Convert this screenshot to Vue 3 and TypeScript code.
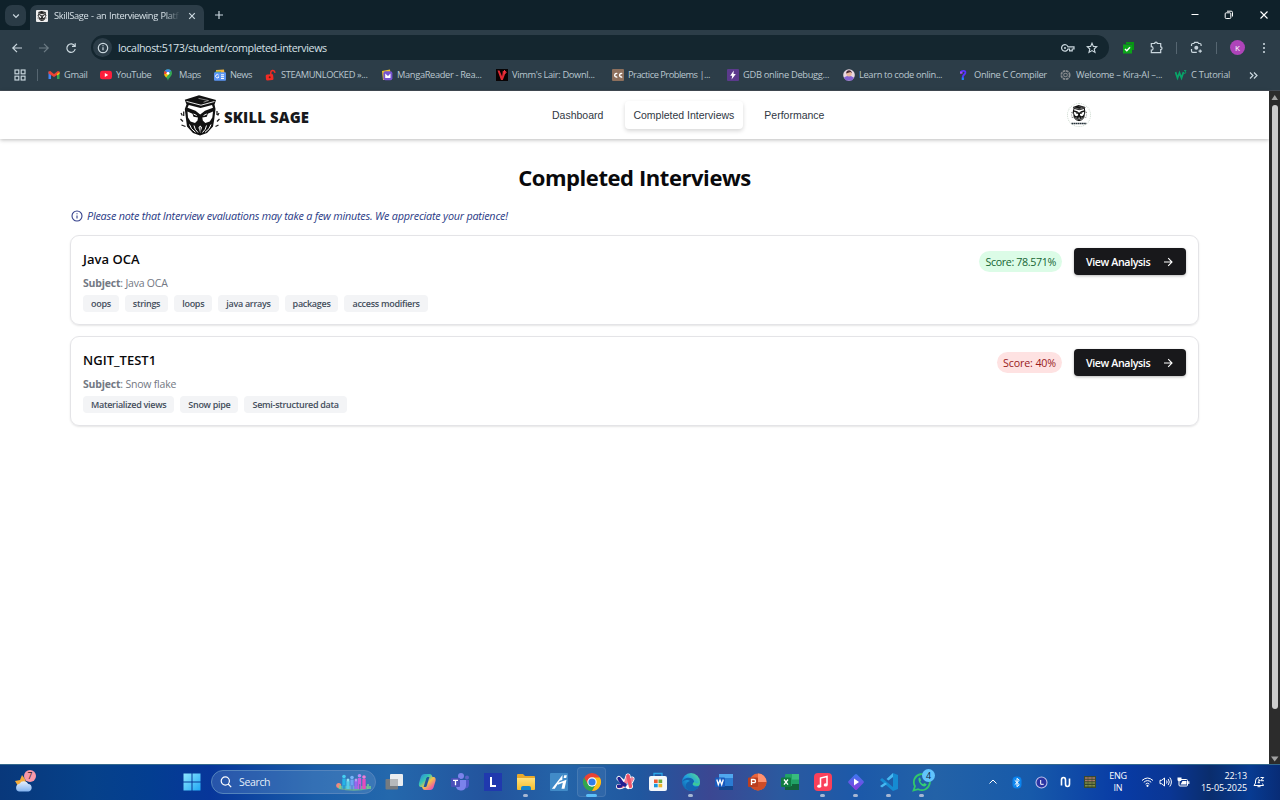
<script setup lang="ts">
interface Bookmark { name: string; icon: string; width: number; gap: number; spacing: number }
interface Interview { title: string; subject: string; topics: string[]; score: string; passed: boolean }

const bookmarks: Bookmark[] = [
  { name: 'Gmail', icon: 'gmail', width: 52, gap: 16, spacing: -0.35 },
  { name: 'YouTube', icon: 'youtube', width: 63, gap: 16, spacing: -0.4 },
  { name: 'Maps', icon: 'maps', width: 51, gap: 16, spacing: -0.45 },
  { name: 'News', icon: 'news', width: 51, gap: 16, spacing: -0.5 },
  { name: 'STEAMUNLOCKED »...', icon: 'lock', width: 116, gap: 16, spacing: -0.38 },
  { name: 'MangaReader - Rea...', icon: 'manga', width: 115, gap: 16, spacing: -0.35 },
  { name: "Vimm's Lair: Downl...", icon: 'vimm', width: 116, gap: 16, spacing: -0.35 },
  { name: 'Practice Problems |...', icon: 'cc', width: 115, gap: 16, spacing: -0.5 },
  { name: 'GDB online Debugg...', icon: 'gdb', width: 116, gap: 16, spacing: -0.3 },
  { name: 'Learn to code onlin...', icon: 'learn', width: 115, gap: 16, spacing: -0.35 },
  { name: 'Online C Compiler', icon: 'compiler', width: 102, gap: 16, spacing: -0.35 },
  { name: 'Welcome – Kira-AI –...', icon: 'kira', width: 115, gap: 16, spacing: -0.28 },
  { name: 'C Tutorial', icon: 'w3', width: 72, gap: 16, spacing: -0.25 }
]

const interviews: Interview[] = [
  { title: 'Java OCA', subject: 'Java OCA', topics: ['oops', 'strings', 'loops', 'java arrays', 'packages', 'access modifiers'], score: '78.571%', passed: true },
  { title: 'NGIT_TEST1', subject: 'Snow flake', topics: ['Materialized views', 'Snow pipe', 'Semi-structured data'], score: '40%', passed: false }
]

const apps = ['desktop', 'copilot', 'teams', 'l', 'files', 'ai', 'chrome', 'arc', 'store', 'edge', 'word', 'ppt', 'excel', 'music', 'clip', 'code', 'whatsapp']
const running = ['files', 'edge', 'music', 'clip', 'code', 'whatsapp']
</script>

<template>
  <div class="screen">
    <svg class="defs" width="0" height="0">
      <defs>
        <linearGradient id="win" x1="0" y1="0" x2="1" y2="1"><stop offset="0" stop-color="#8ee6ff" /><stop offset="1" stop-color="#1fa8f5" /></linearGradient>
        <linearGradient id="cop" x1="0" y1="0" x2="1" y2="1"><stop offset="0" stop-color="#2a7de8" /><stop offset=".35" stop-color="#35c7b2" /><stop offset=".55" stop-color="#f3c34a" /><stop offset=".8" stop-color="#f0639a" /><stop offset="1" stop-color="#b35cf0" /></linearGradient>
        <linearGradient id="edgeg" x1="0" y1="1" x2="1" y2="0"><stop offset="0" stop-color="#0c59a4" /><stop offset=".5" stop-color="#1f9de0" /><stop offset="1" stop-color="#5be38a" /></linearGradient>
        <linearGradient id="folder" x1="0" y1="0" x2="0" y2="1"><stop offset="0" stop-color="#ffe07a" /><stop offset="1" stop-color="#f7bd2d" /></linearGradient>
        <linearGradient id="cloud" x1="0" y1="0" x2="0" y2="1"><stop offset="0" stop-color="#e6effc" /><stop offset="1" stop-color="#83b4f1" /></linearGradient>
        <linearGradient id="clipg" x1="0" y1="0" x2="1" y2="1"><stop offset="0" stop-color="#397bf0" /><stop offset="1" stop-color="#8b39dd" /></linearGradient>
        <symbol id="owl" viewBox="0 0 40 41">
          <path d="M4.800 4.800 19 .2 36 5 34.500 9.500 35.500 14 34.300 24 33 31.500 27 38 20 40.500 13 38 7 31.500 6 24 4.800 14 6.500 9.500Z" fill="#111" />
          <path d="M6.500 6.400 21 10.200 34.500 6.500" fill="none" stroke="#fff" stroke-width=".9" />
          <path d="M18.500 3.400 28.500 5.500 23.500 7.200" fill="none" stroke="#bbb" stroke-width=".7" />
          <path d="M8.800 10 20.500 13 32 10 33 12.800 25 15.800 20.200 19.500 15.500 15.800 7.500 12.800Z" fill="#fff" />
          <path d="M7.500 16.500 12.500 18.800 13.500 21.800 18 22.500 17.500 25.500 15 28 10.500 26.500 8 22.500Z" fill="#fff" />
          <path d="M33 16.500 27.800 18.800 26.800 21.800 22.300 22.500 22.800 25.500 25.300 28 29.800 26.500 32.300 22.500Z" fill="#fff" />
          <path d="M13.500 19 16.700 20.500M26.800 19 23.600 20.500" stroke="#fff" stroke-width="1" />
          <path d="M9.500 29.500Q10.500 34 15.500 37.300M31 29.500Q30 34 25 37.300M14 30.500Q14.500 34.500 18 37.500M26.500 30.500Q26 34.500 22.500 37.500" fill="none" stroke="#fff" stroke-width="1" />
          <path d="M18.500 32.500 20.200 30.500 22 32.500 20.200 38Z" fill="#fff" />
          <path d="M20.200 32v5" stroke="#111" stroke-width=".8" />
          <path d="M1 18 2.300 20.500M.5 24 3 26.500M1.500 30 5.500 31.500M3.700 16.500V21M39 18 37.700 20.500M39.500 24 37 26.500M38.500 30 35.500 31.500M37 16V20" fill="none" stroke="#222" stroke-width="1.300" />
        </symbol>
      </defs>
    </svg>

    <header class="browser">
      <div class="tabstrip">
        <div class="tabsearch"><svg width="10" height="10" viewBox="0 0 10 10"><path d="M2.200 3.500 5 6.300 7.800 3.500" class="ln" /></svg></div>
        <div class="tab">
          <svg class="favicon" width="12" height="12" viewBox="0 0 12 12"><rect width="12" height="12" rx="1" fill="#eee" /><use href="#owl" x="1" y=".5" width="10" height="11" /></svg>
          <span class="tabtitle">SkillSage - an Interviewing Platf</span>
          <svg class="tabclose" width="8" height="8" viewBox="0 0 8 8"><path d="m1.200 1.200 5.600 5.600M6.800 1.200 1.200 6.800" class="ln" /></svg>
        </div>
        <svg class="plus" width="10" height="10" viewBox="0 0 10 10"><path d="M5 1v8M1 5h8" class="ln" /></svg>
        <div class="wincontrols">
          <svg width="8" height="10" viewBox="0 0 8 10"><path d="M.5 4.500h7" stroke="#fff" /></svg>
          <svg width="10" height="10" viewBox="0 0 10 10" fill="none" stroke="#fff"><rect x="1.200" y="2.800" width="5.600" height="5.700" rx="1" /><path d="M3 1.200h4.200a1.300 1.300 0 0 1 1.300 1.300v4" /></svg>
          <svg width="10" height="10" viewBox="0 0 10 10"><path d="m1.500 1.500 7 7M8.500 1.500l-7 7" stroke="#fff" stroke-width="1.100" /></svg>
        </div>
      </div>

      <div class="toolbar">
        <div class="navicons">
          <svg width="12" height="12" viewBox="0 0 12 12"><path d="M11 6H2M6 1.800 1.800 6 6 10.200" class="ln" /></svg>
          <svg class="dim" width="12" height="12" viewBox="0 0 12 12"><path d="M1 6h9M6 1.800 10.200 6 6 10.200" class="ln" /></svg>
          <svg width="12" height="12" viewBox="0 0 12 12"><path d="M9.700 4A4.200 4.200 0 1 0 10.200 7M10.200 1.200v3.200H7" class="ln" /></svg>
        </div>
        <div class="omnibox">
          <div class="siteinfo"><svg width="12" height="12" viewBox="0 0 12 12"><circle cx="6" cy="6" r="4.700" class="ln" /><path d="M6 5.300v3M6 3.200v1" class="ln" /></svg></div>
          <span class="url">localhost:5173/student/completed-interviews</span>
          <div class="omniactions">
            <svg width="14" height="10" viewBox="0 0 14 10"><path d="M7 3.800A3.300 3.300 0 1 0 7 6h1.600v1.800h2.600V6H13V3.800Z" class="ln" /><circle cx="4" cy="4.900" r="1" fill="#cbd8df" /></svg>
            <svg width="12" height="12" viewBox="0 0 12 12"><path d="m6 1.200 1.400 3.200 3.400.3-2.600 2.300.8 3.400-3-1.800-3 1.800.8-3.400L1.200 4.700l3.400-.3Z" class="ln thin" /></svg>
          </div>
        </div>
        <div class="extensions">
          <svg class="ext-green" width="13" height="13" viewBox="0 0 13 13"><path d="M4 1h8v8h-2V3H4Z" fill="#079613" /><rect x="1" y="3.500" width="9" height="9" fill="#0ca51a" /><path d="m3 8 1.800 1.800L8 6.200" fill="none" stroke="#fff" stroke-width="1.400" /></svg>
          <svg class="ext-puzzle" width="13" height="13" viewBox="0 0 13 13"><path d="M1.300 2.500h3.400a1.300 1.300 0 0 1 2.600 0h3.400v3.400a1.300 1.300 0 0 1 0 2.600v3.200H1.300V9.200a1.800 1.800 0 0 0 0-3.600Z" class="ln" /></svg>
          <i class="sep sep-a"></i>
          <svg class="ext-lens" width="13" height="13" viewBox="0 0 13 13"><path d="M1.500 5V3.800c0-.8.500-1.300 1.300-1.300h1.100l.7-1.200h3.200l.7 1.200h1.300c.8 0 1.300.5 1.300 1.300V5M1.500 8v2c0 .8.500 1.300 1.300 1.300h4" class="ln" /><circle cx="6.300" cy="6.800" r="2" fill="#c5d1d9" /><path d="M10.200 8.400v3.400M8.500 10.100h3.400" class="ln" /></svg>
          <i class="sep sep-b"></i>
          <span class="avatar">K</span>
          <svg class="more" width="4" height="12" viewBox="0 0 4 12" fill="#d3dfe6"><circle cx="2" cy="2" r="1" /><circle cx="2" cy="6" r="1" /><circle cx="2" cy="10" r="1" /></svg>
        </div>
      </div>

      <div class="bookmarks">
        <svg class="grid" width="12" height="12" viewBox="0 0 12 12" fill="none" stroke="#c5d2da" stroke-width="1.200"><rect x="1" y="1" width="3.800" height="3.800" /><rect x="7.200" y="1" width="3.800" height="3.800" /><rect x="1" y="7.200" width="3.800" height="3.800" /><rect x="7.200" y="7.200" width="3.800" height="3.800" /></svg>
        <i class="sep sep-bm"></i>
        <div v-for="b in bookmarks" :key="b.name" class="bookmark" :style="{ width: b.width + 'px', letterSpacing: b.spacing + 'px' }">
          <span class="bmicon" :style="{ width: b.gap + 'px' }">
            <svg width="12" height="12" viewBox="0 0 12 12">
              <g v-if="b.icon === 'gmail'"><path d="M.5 2.500V10H3V5Z" fill="#4285f4" /><path d="M11.500 2.500V10H9V5Z" fill="#34a853" /><path d="M.5 2.500 2.200 2 6 5l3.800-3 1.700.5v2L6 8 .5 4.500Z" fill="#ea4335" /><path d="m9 5 2.500-2v2L9 6.500Z" fill="#fbbc04" /></g>
              <g v-else-if="b.icon === 'youtube'"><rect y="1.800" width="12" height="8.500" rx="2.400" fill="#ff1e3c" /><path d="m4.800 4 3.400 2-3.400 2Z" fill="#fff" /></g>
              <g v-else-if="b.icon === 'maps'"><path d="M5 .3A4 4 0 0 0 .9 4.300C.9 7.500 4.300 8.300 5 11.800 5.700 8.300 9 7.500 9 4.300A4 4 0 0 0 5 .3Z" fill="#34a853" /><path d="M5 .3A4 4 0 0 0 1.800 1.800L5 4.400 8.200 1.800A4 4 0 0 0 5 .3Z" fill="#4285f4" /><path d="M1.800 1.800a4 4 0 0 0-.7 3.800L5 4.400Z" fill="#ea4335" /><path d="M1.100 5.600c.4 1.300 1.300 2 2 2.800L6 5 5 4Z" fill="#fbbc04" /><circle cx="5" cy="4.300" r="1.400" fill="#fff" /></g>
              <g v-else-if="b.icon === 'news'"><path d="m2 1 8-.5.5 4H2Z" fill="#f3b53d" /><path d="M1 2.600h6V5H1Z" fill="#34a853" /><rect y="3.300" width="12" height="8.500" rx="1" fill="#5b95f5" /><path d="M4.700 6.200a1.700 1.700 0 1 0 .2 1.700H3.800M7 5.800h3M7 7.700h3M7 9.500h3" stroke="#fff" fill="none" /></g>
              <g v-else-if="b.icon === 'lock'"><path d="M5.800 6V3.500a2 2 0 0 1 3.900-.6l.3 1" fill="none" stroke="#f22b25" stroke-width="1.500" /><rect x=".8" y="5.300" width="7.500" height="6" rx="1.500" fill="#f22b25" transform="rotate(-6 5 8)" /><circle cx="4.700" cy="8.300" r="1" fill="#621" /></g>
              <g v-else-if="b.icon === 'manga'"><path d="m1 2 8-1.500L10 10 2 11Z" fill="#f0c52f" /><rect x="2.400" y="2.200" width="9" height="9" rx="2" fill="#7753cf" /><path d="M4.200 9V4.600L7 7l2.500-2.400V9Z" fill="#fff" /></g>
              <g v-else-if="b.icon === 'vimm'"><rect width="12" height="12" fill="#080304" /><path d="M1.500 1.500h2l2.600 6L6.800 2h3.500L6.800 11H5Z" fill="#e02732" /><path d="M8.500 1v4l2-2" stroke="#ed3440" fill="none" /></g>
              <g v-else-if="b.icon === 'cc'"><rect width="12" height="12" rx="1" fill="#8e705d" /><path d="M5.300 4.600a1.800 1.800 0 1 0 0 3.200M10.200 4.600a1.800 1.800 0 1 0 0 3.200" fill="none" stroke="#fff" stroke-width="1.400" /></g>
              <g v-else-if="b.icon === 'gdb'"><rect width="12" height="12" rx="1" fill="#5b3a8c" /><path d="M6.800 1.500 3.200 6.700h2L4.600 10.500l4.200-5.400H6.500Z" fill="#fff" /></g>
              <g v-else-if="b.icon === 'learn'"><circle cx="6" cy="6" r="5.800" fill="#e9d8e2" /><path d="M1 8.500Q6 5 11 8.700L9 11.500H3Z" fill="#8361d2" /><circle cx="6" cy="4.700" r="2.700" fill="#ecb89d" /><path d="M3.200 4.400C3 0 9 .2 8.800 4.200L7.500 3Z" fill="#482b35" /></g>
              <g v-else-if="b.icon === 'compiler'"><path d="M2.500 3.300C4 1.200 8 1.300 7.300 4 6.900 5.600 5 5.600 4.800 8V11" fill="none" stroke="#5733ff" stroke-width="1.900" /><path d="M2 3.700h2.500" stroke="#a749fb" stroke-width="2" /><path d="M4.800 8.500V11" stroke="#168cfa" stroke-width="2" /></g>
              <g v-else-if="b.icon === 'kira'" fill="none" stroke="#878a8d"><circle cx="5.500" cy="6" r="4.200" stroke-width="1.700" stroke-dasharray="2.600 .7" /><circle cx="5.500" cy="6" r="1.800" stroke-width="1.100" /></g>
              <g v-else fill="none" stroke="#07a568"><path d="m.5 3 2 6L4.500 4l2 5 2-6" stroke-width="1.800" /><path d="M9 1.500h2L10 3c1 0 1.200 1.700-.9 1.400" stroke-width=".9" /></g>
            </svg>
          </span>{{ b.name }}
        </div>
        <svg class="overflow" width="9" height="9" viewBox="0 0 9 9"><path d="m1 1.500 3 3-3 3M5 1.500l3 3-3 3" class="ln" /></svg>
      </div>
    </header>

    <div class="viewport">
      <main class="page">
        <div class="appbar">
          <div class="brand"><svg width="40" height="41"><use href="#owl" width="40" height="41" /></svg><span>SKILL SAGE</span></div>
          <nav class="nav"><a>Dashboard</a><a class="active">Completed Interviews</a><a>Performance</a></nav>
          <div class="profile"><svg width="18" height="21" viewBox="0 0 18 21"><use href="#owl" x="0" y="0" width="18" height="16.500" /><path d="M1.500 18.500h15" stroke="#26323a" stroke-width="1.500" stroke-dasharray="1.700 .4" /></svg></div>
        </div>
        <section class="content">
          <h1>Completed Interviews</h1>
          <p class="note">
            <svg width="12" height="12" viewBox="0 0 12 12" fill="none" stroke="#35418c" stroke-width="1.100"><circle cx="6" cy="6" r="5" /><path d="M6 5.500v3M6 3.200v1" /></svg>
            <em>Please note that Interview evaluations may take a few minutes. We appreciate your patience!</em>
          </p>
          <article v-for="item in interviews" :key="item.title" class="card">
            <div class="info">
              <h2>{{ item.title }}</h2>
              <p class="subject"><b>Subject</b>: {{ item.subject }}</p>
              <div class="topics"><span v-for="t in item.topics" :key="t">{{ t }}</span></div>
            </div>
            <div class="actions">
              <span class="score" :class="{ low: !item.passed }">Score: {{ item.score }}</span>
              <button type="button"><span>View Analysis</span><svg width="10" height="10" viewBox="0 0 10 10" fill="none" stroke="#fff" stroke-width="1.100"><path d="M1 5h8M5.200 1.200 9 5 5.200 8.800" /></svg></button>
            </div>
          </article>
        </section>
      </main>
      <div class="scrollbar">
        <svg width="11" height="12" viewBox="0 0 11 12"><path d="M5.700 4 9 9H2.500Z" fill="#a2a2a2" /></svg>
        <i class="thumb"></i>
        <svg class="down" width="11" height="10" viewBox="0 0 11 10"><path d="M2 2.500h7.500L5.700 7.500Z" fill="#a2a2a2" /></svg>
      </div>
    </div>

    <footer class="taskbar">
      <div class="weather">
        <svg width="22" height="22" viewBox="0 0 22 22"><path d="m1 10 5-1 2-5 3 4 2 7H4Z" fill="#f4ab3b" /><path d="M5 20.500a4 4 0 0 1 .5-7.800 5 5 0 0 1 8.800.3 3.800 3.800 0 0 1 .3 7.500Z" fill="url(#cloud)" /></svg>
        <span class="count">7</span>
      </div>
      <svg class="start" width="18" height="18" viewBox="0 0 18 18" fill="url(#win)"><path d="M.5.5h8v8h-8ZM9.500.5h8v8h-8ZM.5 9.500h8v8h-8ZM9.500 9.500h8v8h-8Z" /></svg>
      <div class="search">
        <svg width="12" height="12" viewBox="0 0 12 12" fill="none" stroke="#fff" stroke-width="1.200"><circle cx="5.300" cy="5" r="4.100" /><path d="m8.200 8 3 3.200" /></svg>
        <span>Search</span>
        <svg class="people" width="36" height="18" viewBox="0 0 36 18">
          <path d="M2 16q16 3.500 31 0l-2-3H4Z" fill="#69ae9a" />
          <g stroke-width="3.400"><path d="M8 5.500v10" stroke="#26b4e6" /><path d="M12 8v8" stroke="#56cce9" /><path d="M16 6.500v9.500" stroke="#6fa4f4" /><path d="M20 8v8" stroke="#9968ee" /><path d="M23.500 5v11" stroke="#cc5bdc" /><path d="M28 6v10" stroke="#e64dbe" /></g>
          <path d="M8 12v4.500M16 12v4.500M23.700 11v5.500" stroke="#3c68a8" stroke-width=".7" />
          <g><circle cx="8" cy="3.500" r="1.800" fill="#47cff1" /><circle cx="12" cy="7" r="1.500" fill="#8be1f1" /><circle cx="16" cy="4.500" r="1.800" fill="#78b3fa" /><circle cx="20" cy="7" r="1.500" fill="#b998f5" /><circle cx="23.500" cy="2.800" r="1.800" fill="#b58af9" /><circle cx="28" cy="4" r="1.800" fill="#ee7cd5" /></g>
          <circle cx="2.700" cy="12.500" r="2.500" fill="#ef8b7d" /><path d="M4 16v-4M32 16v-5M34 16v-3" stroke="#78d38c" stroke-width="1.500" />
        </svg>
      </div>
      <div class="apps">
        <div v-for="a in apps" :key="a" class="app" :class="{ current: a === 'chrome' }">
          <svg width="20" height="20" viewBox="0 0 20 20">
            <g v-if="a === 'desktop'"><rect x="6" y="2" width="13" height="12" rx="1" fill="#e9edf0" /><rect x="1.500" y="7" width="12.500" height="10.500" rx="1" fill="#757b80" /><path d="M6 7h8v7H6Z" fill="#b5b9bc" /></g>
            <g v-else-if="a === 'copilot'"><path d="M7.500 2h5c2 0 2.500 1.500 3 3h1c2 0 2.500 2 2 4l-1.800 6c-.7 2-1.800 3-3.700 3h-5c-2 0-2.500-1.500-3-3h-1c-2 0-2.500-2-2-4l1.800-6C4.500 3 5.600 2 7.500 2Z" fill="url(#cop)" /><path d="M12.400 5H11c-1 0-1.500.7-1.800 1.600l-2.600 8.400H8c1 0 1.600-.6 1.900-1.600Z" fill="#2057a0" /></g>
            <g v-else-if="a === 'teams'"><circle cx="11" cy="4" r="3" fill="#7b83eb" /><circle cx="17" cy="5.500" r="2" fill="#5b64c8" /><path d="M14 8h5v5q-.5 4-5 3.500Z" fill="#5059c9" /><path d="M7 8h9v6q-1 5-5.500 4.500Q6 18 6 14Z" fill="#7b83eb" /><rect x="1" y="6" width="9" height="9" rx="1" fill="#4a50ba" /><path d="M3 8.300h5M5.500 8.300v5" stroke="#fff" stroke-width="1.300" /></g>
            <g v-else-if="a === 'l'"><rect x="1" y="1" width="18" height="18" fill="#2039ae" /><path d="M8 5v9h5" stroke="#fff" stroke-width="2" fill="none" /></g>
            <g v-else-if="a === 'files'"><path d="M1 3q0-1 1-1h5l2 2h9q1 0 1 1v12H1Z" fill="#eaa92a" /><path d="M1 6h18v11q0 1-1 1H2q-1 0-1-1Z" fill="url(#folder)" /><path d="M5 18v-2q0-2 2-2h6q2 0 2 2v2Z" fill="#1785cb" /></g>
            <g v-else-if="a === 'ai'"><rect x="1" y="1" width="18" height="18" rx="1" fill="#418bc8" /><path d="M2.800 16.800 13.500 3l-.2 5-2.500.8-5 8Z" fill="#fff" /><path d="M8.500 11 17.500 7.800 15.500 16.800h-3l1.300-6-5 2Z" fill="#fff" /><path d="M15.200 3.300h2.700l-.7 2.800h-2.500Z" fill="#fff" /></g>
            <g v-else-if="a === 'chrome'"><circle cx="10" cy="10" r="9" fill="#e94335" /><path d="M2.200 5.500A9 9 0 0 0 10 19l4-6.700H6Z" fill="#2fa74f" /><path d="M17.800 5.500A9 9 0 0 1 10 19l4-7-3-6.500Z" fill="#fbc116" /><circle cx="10" cy="10" r="4.700" fill="#fff" /><circle cx="10" cy="10" r="3.600" fill="#327de8" /></g>
            <g v-else-if="a === 'arc'" stroke-linejoin="round" stroke-linecap="round" fill="none"><path d="M4 6.500 13 14.500M3.500 14.500Q8 15.500 11 10L13 4M13 4 15.500 14.500M17 7Q15.500 12 8.500 12" stroke="#fff" stroke-width="5" /><path d="M17 7Q15.500 12 8 12" stroke="#8bbff5" stroke-width="3.200" /><path d="M3.500 14.500Q8 15.500 11 10L13 4M17 7 15 10" stroke="#f58296" stroke-width="3.400" /><path d="M13 4 15.500 14.500" stroke="#ef5468" stroke-width="3.400" /><path d="M4 6.500 7 11 10 13M3.500 14.200 6 14" stroke="#221f91" stroke-width="3.400" /></g>
            <g v-else-if="a === 'store'"><path d="M6 5V1.500h8V5" fill="none" stroke="#2ca6e8" stroke-width="1.300" /><rect x="1" y="4" width="18" height="15" rx="2" fill="#f4f7fa" /><path d="M6 7.500h3.700v3.500H6Z" fill="#ee5b32" /><path d="M10.500 7.500h3.700v3.500h-3.700Z" fill="#6aa83c" /><path d="M6 11.800h3.700v3.500H6Z" fill="#1797db" /><path d="M10.500 11.800h3.700v3.500h-3.700Z" fill="#efb529" /></g>
            <g v-else-if="a === 'edge'"><circle cx="10" cy="10" r="9" fill="url(#edgeg)" /><path d="M1 11C2 5 11 4 13 9c.5 2-2 2-1 4 1 2 4 2 6.500.5C15 20 9 20 6 17c-2.500-3-1-7 3-8-3-2-7-.5-8 2Z" fill="#1464b2" /><path d="M12 13c-1-2 1.500-2 1-4 2 4 6 2 6 0 0 4-1 5-3 5Z" fill="#3cc899" /></g>
            <g v-else-if="a === 'word'"><rect x="5" y="2" width="14" height="16" rx="1" fill="#2b7cd3" /><path d="M5 2h14v4H5Z" fill="#50a7ee" /><path d="M5 14h14v4H5Z" fill="#12478e" /><rect x="1" y="5.500" width="10" height="9.500" rx="1" fill="#185abd" /><path d="m2.800 7.500 1.500 5.200L6 8l1.700 4.700 1.600-5.200" fill="none" stroke="#fff" stroke-width="1.300" /></g>
            <g v-else-if="a === 'ppt'"><circle cx="11" cy="10" r="8.500" fill="#e9643c" /><path d="M11 1.500V10h8.500A8.500 8.500 0 0 0 11 1.500Z" fill="#ff9270" /><path d="M2.500 10h17a8.500 8.500 0 0 1-17 0Z" fill="#cf4c28" /><rect x="1" y="5.500" width="10" height="9.500" rx="1" fill="#bb3e20" /><path d="M4.500 13V7.500H7q1.500 0 1.500 1.600T7 10.700H4.500" fill="none" stroke="#fff" stroke-width="1.300" /></g>
            <g v-else-if="a === 'excel'"><rect x="5" y="2" width="14" height="16" rx="1" fill="#21a366" /><path d="M12 2h7v5.500h-7Z" fill="#38bc7e" /><path d="M12 12h7v6H5v-4h7Z" fill="#12633a" /><rect x="1" y="5.500" width="10" height="9.500" rx="1" fill="#107c41" /><path d="m4 7.500 4 5.200M8 7.500l-4 5.200" stroke="#fff" stroke-width="1.300" /></g>
            <g v-else-if="a === 'music'"><rect x="1" y="1" width="18" height="18" rx="4" fill="#fa405a" /><path d="M7.500 14V6l6.500-1.500v8.200" fill="none" stroke="#fff" stroke-width="1.500" /><ellipse cx="6.200" cy="14.200" rx="2" ry="1.600" fill="#fff" /><ellipse cx="12.700" cy="12.900" rx="2" ry="1.600" fill="#fff" /></g>
            <g v-else-if="a === 'clip'"><rect x="4" y="4" width="12" height="12" rx="1.500" transform="rotate(45 10 10)" fill="url(#clipg)" /><path d="M8 6.500 13 10l-5 3.500Z" fill="#fff" /></g>
            <g v-else-if="a === 'code'"><path d="m14 1 5 2v14l-5 2L1 8l2-2 11 9Z" fill="#168bd2" /><path d="M14 5 9.500 8.600 7.500 7 14 1ZM6 10.500 8 12l-5 3.500-2-1.500Z" fill="#47b9f2" /></g>
            <g v-else><path d="M1.500 18.500 3 14.200A8 8 0 1 1 6.200 17.200Z" fill="none" stroke="#31c86a" stroke-width="1.800" /><path d="M6.700 6 8 5.500l1.200 2.800-1 1.200q1.200 2 3 2.800l1-1.200 2.500 1.200q-.5 2-2.300 2.200C9.500 14.500 5.500 9.500 6.700 6Z" fill="#35d174" /></g>
          </svg>
          <i v-if="running.includes(a)" class="dot"></i>
          <i v-if="a === 'chrome'" class="pill"></i>
          <span v-if="a === 'whatsapp'" class="badge">4</span>
        </div>
      </div>
      <div class="tray">
        <svg class="t-up" width="10" height="8" viewBox="0 0 10 8"><path d="m1.500 5.500 3.500-3.500 3.500 3.500" class="wt" /></svg>
        <svg class="t-bt" width="10" height="13" viewBox="0 0 10 13"><rect x=".5" y=".5" width="9" height="12" rx="4" fill="#0a84ef" /><path d="m2.700 4.300 4.600 4.400L5 10.700V2.300l2.300 2-4.600 4.400" fill="none" stroke="#fff" /></svg>
        <svg class="t-clock" width="13" height="13" viewBox="0 0 13 13"><circle cx="6.500" cy="6.500" r="5.500" fill="#2b35a4" stroke="#bcbfea" stroke-width="1.100" /><path d="M5.700 4v4.300h3" class="wt" /></svg>
        <svg class="t-n" width="12" height="12" viewBox="0 0 12 12"><path d="M1.500 9.500V4Q1.500 1.500 3.500 1.500T5.500 4V8Q5.500 10.500 7.500 10.500T9.500 8V2.500" fill="none" stroke="#fff" stroke-width="1.600" /></svg>
        <svg class="t-grid" width="12" height="12" viewBox="0 0 12 12"><rect width="12" height="12" fill="#394a2d" /><path d="M1 2h10M1 4.500h10" stroke="#ab7a6c" stroke-width="1.600" /><path d="M1 7h10M1 9.700h10" stroke="#7f8d48" stroke-width="1.600" /><path d="M4 0v12M8 0v12" stroke="#37422e" stroke-width=".5" /></svg>
        <div class="lang">ENG<br>IN</div>
        <svg class="t-wifi" width="13" height="12" viewBox="0 0 13 12"><path d="M1 4.500q5.500-5 11 0M2.800 6.300q3.700-3.400 7.400 0M4.600 8.100q1.900-1.800 3.800 0" class="wt" /><circle cx="6.500" cy="9.800" r="1.100" fill="#fff" /></svg>
        <svg class="t-vol" width="13" height="12" viewBox="0 0 13 12"><path d="M1 4.300h1.700L5.500 2v8L2.700 7.700H1ZM7.500 4.500q1.200 1.500 0 3M9.200 3q2.200 3 0 6M10.800 1.500q3.200 4.500 0 9" class="wt" /></svg>
        <svg class="t-bat" width="13" height="12" viewBox="0 0 13 12"><rect x="2" y="3.500" width="8.500" height="6.500" rx="1" class="wt" /><path d="M5.500 5h4v3.500h-6ZM11.200 5.300h1.200v2.800h-1.200ZM.5 1.500h4V4q0 1.300-2 1.300T.5 4Z" fill="#fff" /></svg>
        <div class="time">22:13<br>15-05-2025</div>
        <svg class="t-bell" width="12" height="12" viewBox="0 0 12 12"><path d="M6 1.500Q2.500 1.500 2.500 5v2L1 9.500h9.500L9.500 7.500M4.500 10.700h3M7.500 1.500h3.200L7.700 4.700h3.200M5 4h2L5 6.700h2" class="wt" /></svg>
      </div>
    </footer>
  </div>
</template>

<style>
html, body { margin: 0; overflow: hidden; background: #fff; }
</style>

<style scoped>
* { box-sizing: border-box; }
.screen { width: 1280px; height: 800px; display: flex; flex-direction: column; overflow: hidden; font-family: "Open Sans", "Noto Sans", sans-serif; }
.screen svg { display: block; flex: none; }
.defs { position: absolute; }
i { display: block; flex: none; }
.ln { fill: none; stroke: #cbd8df; stroke-width: 1.2; }
.ln.thin { stroke-width: 1.1; }
.wt { fill: none; stroke: #fff; stroke-width: 1; }
.dim { opacity: .4; }

.browser { height: 91px; flex: none; background: #2c3d48; border-bottom: 1px solid #434b55; color: #d7e1e7; }
.tabstrip { height: 30px; display: flex; background: #0f212a; }
.tabsearch { width: 21px; height: 21px; margin: 5px 0 0 5px; border-radius: 7px; background: #2a3b46; display: grid; place-items: center; }
.tab { width: 174px; height: 25px; margin: 5px 0 0 4px; border-radius: 7px 7px 0 0; background: #2c3d48; display: flex; align-items: center; padding-left: 6px; padding-bottom: 4px; }
.tabtitle { width: 126px; margin-left: 6px; white-space: nowrap; font-size: 9.3px; letter-spacing: -.35px; word-spacing: .5px; -webkit-mask-image: linear-gradient(90deg, #000 88%, transparent); mask-image: linear-gradient(90deg, #000 88%, transparent); }
.tabclose { margin-left: 8px; }
.plus { margin: 10px 0 0 10px; }
.wincontrols { margin: 10px 11px 0 auto; display: flex; gap: 25px; }
.toolbar { height: 34px; display: flex; align-items: center; padding-top: 1px; }
.navicons { width: 91px; padding-left: 11px; display: flex; gap: 15px; }
.omnibox { width: 1018px; height: 25px; border-radius: 13px; background: #14262f; display: flex; align-items: center; padding-left: 2px; }
.siteinfo { width: 19px; height: 19px; border-radius: 50%; background: #2c3d48; display: grid; place-items: center; }
.url { margin-left: 6px; font-size: 10.7px; letter-spacing: -.39px; line-height: 20px; }
.omniactions { margin: 0 11px 0 auto; display: flex; align-items: center; gap: 11px; }
.extensions { display: flex; align-items: center; width: 171px; }
.ext-green { margin-left: 13px; }
.ext-puzzle { margin-left: 15px; }
.sep { width: 1px; height: 12px; background: #566671; }
.sep-a { margin-left: 13px; }
.ext-lens { margin-left: 13px; }
.sep-b { margin-left: 13px; }
.avatar { width: 15px; height: 15px; margin-left: 13px; border-radius: 50%; background: #ae44b9; color: #fff; font: 8px/15px "Open Sans", sans-serif; text-align: center; }
.more { margin-left: 17px; }
.bookmarks { height: 22px; display: flex; align-items: center; font-size: 9.3px; white-space: nowrap; }
.grid { margin-left: 14px; }
.sep-bm { margin: 0 10px 0 11px; }
.bookmark { display: flex; align-items: center; flex: none; line-height: 14px; color: #bac7cf; }
.bmicon { flex: none; }
.overflow { margin-left: 2px; }

.viewport { height: 673px; flex: none; display: flex; }
.page { width: 1269px; }
.appbar { height: 48px; display: flex; box-shadow: 0 1px 4px rgba(0, 0, 0, .27); }
.brand { width: 364px; padding: 4px 0 0 180px; display: flex; align-items: flex-start; color: #17191c; white-space: nowrap; }
.brand span { margin: 12px 0 0 4px; font-size: 14.9px; font-weight: 800; line-height: 21px; letter-spacing: .13px; }
.nav { margin-left: 180px; display: flex; gap: 13.5px; padding-top: 10px; }
.nav a { height: 28px; padding: 0 8px; border-radius: 4px; font: 10.5px/29px "Liberation Sans", Arial, sans-serif; color: #303743; white-space: nowrap; }
.nav a.active { box-shadow: 0 2px 4px rgba(0, 0, 0, .16); padding: 0 8.5px; }
.profile { width: 24px; height: 24px; margin: 12px 178px 0 auto; border: 1px dotted #ccd9ce; border-radius: 50%; display: grid; place-items: center; }
.content { padding: 0 70px; }
h1 { margin: 20px 0 0; font-size: 22px; line-height: 36px; letter-spacing: -.43px; font-weight: 700; text-align: center; color: #09090b; }
.note { height: 16px; margin: 13px 0 11px; display: flex; align-items: center; gap: 4px; font-size: 10.8px; line-height: 16px; color: #293985; white-space: nowrap; padding-left: 1px; }
.note em { letter-spacing: -.21px; }
.card { height: 90px; margin: 0 0 11px; padding: 12px; display: flex; border: 1px solid #e4e4e7; border-radius: 9px; box-shadow: 0 1px 2px rgba(0, 0, 0, .1); }
.info { flex: 1; }
h2 { margin: 0; font-size: 13px; line-height: 22px; font-weight: 600; letter-spacing: .02px; color: #09090b; }
.subject { margin: 5px 0 0; font-size: 10.5px; line-height: 16px; letter-spacing: -.2px; color: #737883; }
.topics { margin-top: 4px; display: flex; gap: 6px; }
.topics span { height: 17px; padding: 0 8px; border-radius: 4px; background: #f3f4f6; color: #444e5c; font-size: 9px; font-weight: 600; line-height: 17px; letter-spacing: -.29px; }
.actions { display: flex; align-items: flex-start; }
.score { height: 21px; margin: 3px 12px 0 0; padding: 0 6px; border-radius: 11px; background: #dcfce7; color: #166534; font-size: 10.7px; line-height: 22px; font-weight: 500; letter-spacing: -.36px; }
.score.low { background: #fee2e2; color: #991b1b; letter-spacing: -.15px; }
button { width: 112px; height: 27px; padding: 0 13px 0 12px; border: 0; border-radius: 4px; background: #18181b; color: #fff; display: flex; align-items: center; justify-content: space-between; font: 600 10.7px/27px "Open Sans", sans-serif; letter-spacing: -.4px; box-shadow: 0 1px 3px rgba(0, 0, 0, .28); }
button span { padding-top: 1px; }
.scrollbar { width: 11px; background: #2c2c2c; display: flex; flex-direction: column; align-items: center; }
.thumb { width: 6px; height: 604px; margin: 2px 0 0 1px; border-radius: 3px; background: #ccc; }
.down { margin-top: auto; }

.taskbar { height: 36px; flex: none; display: flex; align-items: center; color: #fff; padding-bottom: 1px; border-top: 1px solid #34698d; background: linear-gradient(90deg, #08387b 0, #06418a 90px, #033e91 150px, #07369a 210px, #195da9 315px, #2468ac 390px, #23539d 490px, #2464a8 565px, #20579f 640px, #3b4792 710px, #2b599f 780px, #1c59a9 860px, #2362a7 935px, #175aaa 1030px, #083ba5 1120px, #0a3694 1170px, #0a2d6d 1210px, #073b92 1250px, #082c76 1280px); }
.weather { position: relative; margin-left: 14px; }
.count { position: absolute; left: 10px; top: -1px; width: 12px; height: 12px; border-radius: 50%; background: #f898a9; color: #291620; font-size: 8.5px; line-height: 12px; text-align: center; }
.start { margin-left: 147px; }
.search { width: 165px; height: 24px; margin-left: 10px; padding-left: 8px; border: 1px solid #5484bd; border-radius: 12px; background: rgba(126, 166, 215, .27); display: flex; align-items: center; font-size: 10.5px; }
.search span { margin-left: 7px; letter-spacing: -.35px; color: #e5eff9; }
.people { margin-left: auto; margin-right: 3px; }
.apps { display: flex; margin-left: 1px; }
.app { width: 33px; height: 34px; display: grid; place-items: center; position: relative; }
.app.current::before { content: ""; position: absolute; inset: 2px 2px; border: 1px solid rgba(255, 255, 255, .1); border-radius: 4px; background: rgba(255, 255, 255, .06); }
.app svg { position: relative; }
.dot, .pill { position: absolute; bottom: 2px; left: 14px; width: 5px; height: 3px; border-radius: 2px; background: #a6b7d3; }
.pill { left: 11px; width: 11px; background: #5dc0fa; }
.badge { position: absolute; right: 3px; top: 4px; width: 13px; height: 13px; border-radius: 50%; background: #61c4fc; color: #102338; font-size: 9px; line-height: 13px; text-align: center; }
.tray { display: flex; align-items: center; margin-left: 50px; font-size: 9px; line-height: 12px; }
.t-bt { margin-left: 14px; }
.t-clock { margin-left: 13px; }
.t-n { margin-left: 12px; }
.t-grid { margin-left: 12px; }
.lang { width: 20px; margin-left: 12px; text-align: center; letter-spacing: -.2px; white-space: nowrap; }
.t-wifi { margin-left: 13px; }
.t-vol { margin-left: 5px; }
.t-bat { margin-left: 5px; }
.time { width: 51px; margin-left: 6px; text-align: right; letter-spacing: -.1px; white-space: nowrap; }
.t-bell { margin-left: 6px; }
</style>
